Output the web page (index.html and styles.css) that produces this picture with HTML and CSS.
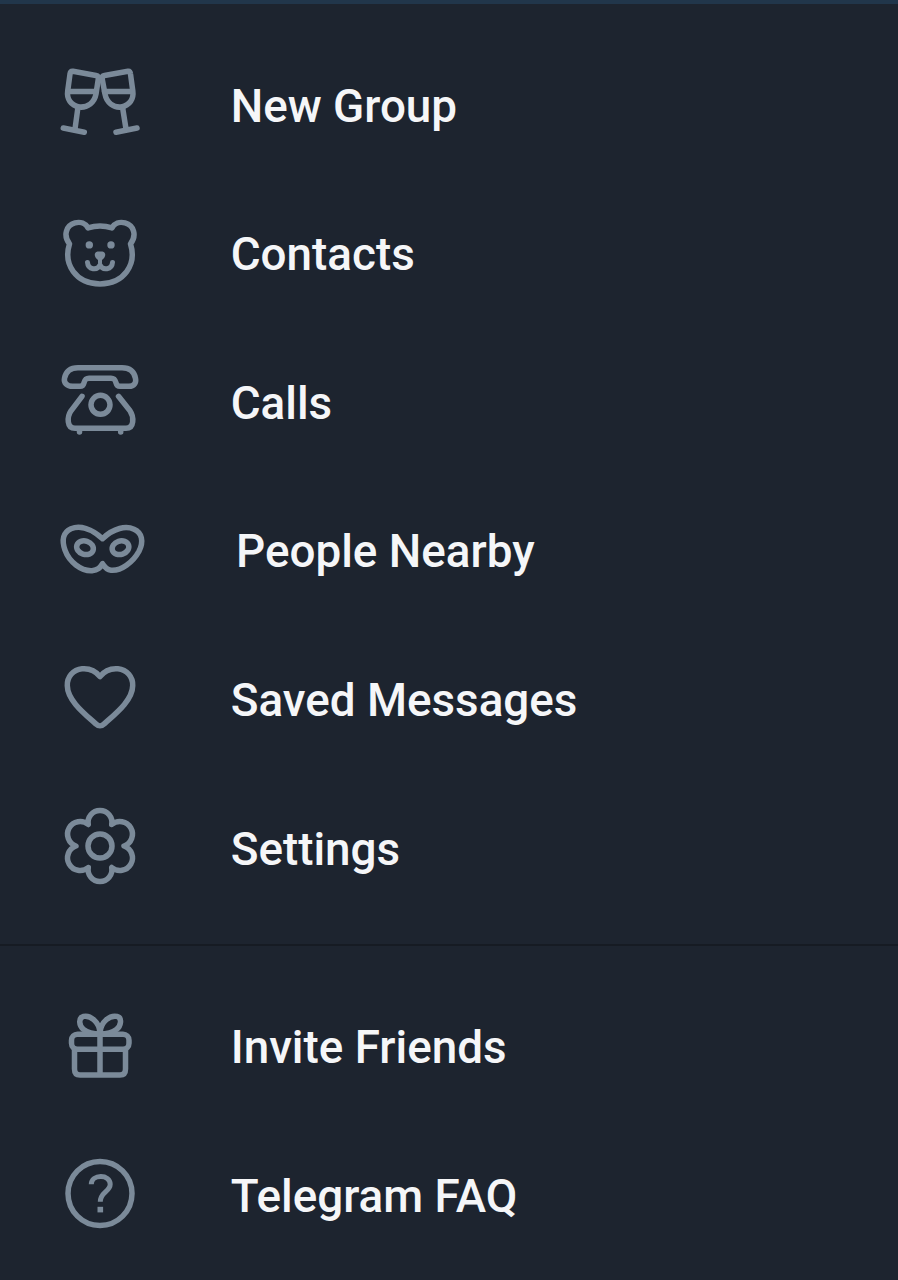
FILE: index.html
```html
<!DOCTYPE html>
<html lang="en">
<head>
  <meta charset="UTF-8" />
  <meta name="viewport" content="width=device-width, initial-scale=1.0" />
  <title>Telegram</title>
  <link rel="stylesheet" href="styles.css">
</head>
<body>

<div class="drawer">
  <div class="header-edge"></div>

  <nav class="menu menu-main">
    <a class="menu-item">
      <svg class="icon" viewBox="0 4 100 90">
        <path d="M23 16.3 L46 20.5 Q48.8 21 48.3 24 L46 39 C44.5 47.5 37.5 53 29 52 C21 50.5 16.5 44 17.7 36 L20 19 Q20.5 16 23 16.3 Z" />
        <path d="M78 16.3 L54.5 20.5 Q51.7 21 52.2 24 L55 39 C56.5 47.5 63.5 53 71.5 52 C79.5 50.5 84 44 82.8 36 L80.5 19 Q80.3 16 78 16.3 Z" />
        <path d="M18 36.5 H46 M54.5 36.5 H82 M28 52 L25 74 M72.5 52 L76 74 M13.3 73 L34.3 77.2 M87 73 L66 77.2" />
      </svg>
      <span>New Group</span>
    </a>
    <a class="menu-item">
      <svg class="icon" viewBox="0 2.6 100 90">
        <path d="M38 22.5 C45.5 20 54.5 20 62 22.5 C64.5 18 69.5 16 75 17.5 C84 20 87 30 80.5 38.5 C87 59 74 78.5 50 78.5 C26 78.5 13 59 19.5 38.5 C13 30 16 20 25 17.5 C30.5 16 35.5 18 38 22.5 Z" />
        <circle class="solid" cx="39.3" cy="39.5" r="3.7" />
        <circle class="solid" cx="61" cy="39.5" r="3.7" />
        <path class="solid" d="M47.5 46 H52.5 C56.5 47 56 52 52 54.5 V58 H48 V54.5 C44 52 43.5 47 47.5 46 Z" />
        <path class="mouth" d="M37.5 57 C38 64.5 47.5 65.5 50 59.5 C52.5 65.5 62 64.5 62.5 57" />
      </svg>
      <span>Contacts</span>
    </a>
    <a class="menu-item">
      <svg class="icon" viewBox="0 1.2 100 90">
        <path d="M22.5 31.5 H30 C32.5 31.5 33.5 30 34 28 C35 24.5 36 23.5 39 23.5 H61 C64 23.5 65 24.5 66 28 C66.5 30 67.5 31.5 70 31.5 H79 C84 31.5 86.5 28 85.5 23.5 C84 16 79 13 72 13 H28 C21 13 16 16 14.5 23.5 C13.5 28 17 31.5 22.5 31.5 Z" />
        <path d="M32 41.5 L21 56 C17 62 16.5 73.5 25 73.5 H76 C84.5 73.5 84 62 80 56 L68.5 41.5" />
        <circle cx="50.5" cy="50" r="9.5" />
        <path d="M29.5 74 V77.3 M70.7 74 V77.3" />
      </svg>
      <span>Calls</span>
    </a>
    <a class="menu-item">
      <svg class="icon" viewBox="0 -0.2 100 90">
        <path d="M52.5 33.5 C64 22.5 76 20.5 84 24 C92 27.5 94 36 89 46 C83 57 71 66 61 65 C57 64.5 55 62.5 52.5 58.5 C50 62.5 48 65 42 65.5 C31 66 19 56.5 15 45 C11.5 35 13 27 21 23.5 C30 20 41.5 23.5 52.5 33.5 Z" />
        <ellipse cx="35" cy="42.5" rx="8.5" ry="6.7" transform="rotate(18 35 42.5)" />
        <ellipse cx="70.5" cy="42.5" rx="8.5" ry="6.7" transform="rotate(-18 70.5 42.5)" />
      </svg>
      <span class="label-shift">People Nearby</span>
    </a>
    <a class="menu-item">
      <svg class="icon" viewBox="0 -1.6 100 90">
        <path d="M50 22 C45 15.5 38 13.7 32 14.2 C23 15 17 22.5 17.3 31 C17.5 46 35 59.5 45.5 69 C49 72.2 51 72.2 54.5 69 C65 59.5 82.5 46 82.7 31 C83 22.5 77 15 68 14.2 C62 13.7 55 15.5 50 22 Z" />
      </svg>
      <span>Saved Messages</span>
    </a>
    <a class="menu-item">
      <svg class="icon" viewBox="0 2 100 90">
        <path d="M38.3 24.5 A11.9 11.9 0 1 1 61.7 24.5 A12.6 12.6 0 1 1 74 46 A12.6 12.6 0 1 1 61.7 67.5 A11.9 11.9 0 1 1 38.3 67.5 A12.6 12.6 0 1 1 26 46 A12.6 12.6 0 1 1 38.3 24.5 Z" />
        <circle cx="50" cy="46" r="12" />
      </svg>
      <span>Settings</span>
    </a>
  </nav>

  <div class="divider"></div>

  <nav class="menu menu-extra">
    <a class="menu-item">
      <svg class="icon" viewBox="0 0.6 100 90">
        <rect x="21.5" y="33.8" width="57.5" height="15" rx="6" />
        <path d="M24.5 49 V68.5 C24.5 72.5 26.5 74.5 30 74.5 H70 C73.5 74.5 75.5 72.5 75.5 68.5 V49 M50 26 V74" />
        <path d="M50 32 C49 21 40 14.5 33.5 16 C28 17.5 29 25.5 33.5 29 C38 32.5 43 33.5 50 33.5 C57 33.5 62 32.5 66.5 29 C71 25.5 72.5 17.5 67 16 C60 14.5 51 21 50 32 Z" />
      </svg>
      <span>Invite Friends</span>
    </a>
    <a class="menu-item">
      <svg class="icon" viewBox="0 -0.8 100 90">
        <circle cx="50" cy="43.7" r="32" />
        <path class="question" d="M41.3 34.5 C41.3 24.5 60.2 24 60.2 34.5 C60.2 42 50.3 42 50.3 52" />
        <rect class="solid" x="47.5" y="57" width="5.6" height="5.6" />
      </svg>
      <span>Telegram FAQ</span>
    </a>
  </nav>
</div>

</body>
</html>
```
FILE: styles.css
```css
body {
  margin: 0;
  background-color: #1d242f;
  color: #f5f6f8;
  font-family: Roboto, sans-serif;
}

.drawer {
  height: 1280px;
  overflow: hidden;
}

.header-edge {
  height: 4px;
  background-color: #21364b;
}

.menu-main {
  padding: 25.7px 0 22.7px;
}

.menu-extra {
  padding-top: 25.3px;
}

.menu-item {
  display: flex;
  align-items: center;
  height: 148.6px;
  padding-left: 50px;
  font-size: 45.8px;
  font-weight: 500;
  line-height: 54px;
  white-space: nowrap;
}

.menu-item span {
  margin-left: 80.7px;
  padding-top: 5.4px;
}

.menu-item .label-shift {
  margin-left: 86px;
}

.icon {
  width: 100px;
  height: 90px;
  flex-shrink: 0;
  overflow: visible;
  fill: none;
  stroke: #7b8a99;
  stroke-width: 5.5;
  stroke-linecap: round;
  stroke-linejoin: round;
}

.icon .solid {
  fill: #7b8a99;
  stroke: none;
}

.icon .mouth {
  stroke-width: 5;
}

.icon .question {
  stroke-width: 5;
  stroke-linecap: butt;
}

.divider {
  height: 2px;
  background-color: #161b23;
}
```
